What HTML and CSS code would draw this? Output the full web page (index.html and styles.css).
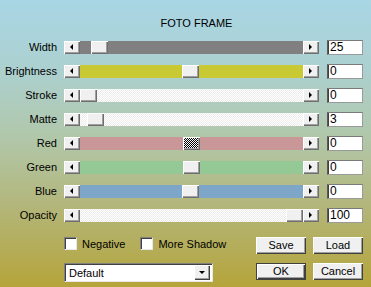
FILE: index.html
```html
<!DOCTYPE html>
<html>
<head>
<meta charset="utf-8">
<link rel="stylesheet" href="styles.css">
</head>
<body>
<div class="dialog">
  <div class="title">FOTO FRAME</div>
  <div class="rows">
    <div class="row">
      <span class="label">Width</span>
      <div class="slider">
        <span class="arrow left"></span>
        <div class="track t-gray"><span class="thumb" style="margin-left:11px"></span></div>
        <span class="arrow right"></span>
      </div>
      <div class="value">25</div>
    </div>
    <div class="row">
      <span class="label">Brightness</span>
      <div class="slider">
        <span class="arrow left"></span>
        <div class="track t-yellow"><span class="thumb" style="margin-left:102px"></span></div>
        <span class="arrow right"></span>
      </div>
      <div class="value">0</div>
    </div>
    <div class="row">
      <span class="label">Stroke</span>
      <div class="slider">
        <span class="arrow left"></span>
        <div class="track t-white"><span class="thumb" style="margin-left:0px"></span></div>
        <span class="arrow right"></span>
      </div>
      <div class="value">0</div>
    </div>
    <div class="row">
      <span class="label">Matte</span>
      <div class="slider">
        <span class="arrow left"></span>
        <div class="track t-white"><span class="thumb" style="margin-left:7px"></span></div>
        <span class="arrow right"></span>
      </div>
      <div class="value">3</div>
    </div>
    <div class="row">
      <span class="label">Red</span>
      <div class="slider">
        <span class="arrow left"></span>
        <div class="track t-red"><span class="thumb focus" style="margin-left:103px"></span></div>
        <span class="arrow right"></span>
      </div>
      <div class="value">0</div>
    </div>
    <div class="row">
      <span class="label">Green</span>
      <div class="slider">
        <span class="arrow left"></span>
        <div class="track t-green"><span class="thumb" style="margin-left:103px"></span></div>
        <span class="arrow right"></span>
      </div>
      <div class="value">0</div>
    </div>
    <div class="row">
      <span class="label">Blue</span>
      <div class="slider">
        <span class="arrow left"></span>
        <div class="track t-blue"><span class="thumb" style="margin-left:102px"></span></div>
        <span class="arrow right"></span>
      </div>
      <div class="value">0</div>
    </div>
    <div class="row">
      <span class="label">Opacity</span>
      <div class="slider">
        <span class="arrow left"></span>
        <div class="track t-white"><span class="thumb" style="margin-left:206px"></span></div>
        <span class="arrow right"></span>
      </div>
      <div class="value">100</div>
    </div>
  </div>
  <div class="bottom">
    <div class="left-col">
      <div class="checks">
        <label class="check"><span class="box"></span>Negative</label>
        <label class="check"><span class="box"></span>More Shadow</label>
      </div>
      <div class="select">
        <span class="select-text">Default</span>
        <span class="select-btn"></span>
      </div>
    </div>
    <div class="buttons">
      <div class="btn">Save</div>
      <div class="btn">Load</div>
      <div class="btn default">OK</div>
      <div class="btn">Cancel</div>
    </div>
  </div>
</div>
</body>
</html>
```
FILE: styles.css
```css
html, body {
  margin: 0;
  padding: 0;
}
body {
  width: 371px;
  height: 287px;
  overflow: hidden;
  font-family: "Liberation Sans", Arial, sans-serif;
  font-size: 11px;
  color: #000;
}
.dialog {
  width: 371px;
  height: 287px;
  box-sizing: border-box;
  background: linear-gradient(180deg, #a9d6e5 0%, #acd0cf 25%, #b1c6a6 50%, #b3b67a 72%, #b5a43a 100%);
  padding-top: 16px;
}
.title {
  padding-left: 22px;
  text-align: center;
  font-size: 11px;
  line-height: 14px;
  height: 14px;
}
.rows {
  margin-top: 5px;
  display: flex;
  flex-direction: column;
}
.row {
  height: 24px;
  display: flex;
  align-items: center;
}
.label {
  width: 57px;
  text-align: right;
  margin-right: 7px;
  line-height: 13px;
}
.slider {
  width: 255px;
  height: 13px;
  display: flex;
}
.arrow {
  width: 16px;
  height: 13px;
  box-sizing: border-box;
  background: #f0f0f0;
  box-shadow: inset 1px 1px #ffffff, inset -1px -1px #6e6e6e, inset -2px -2px #a0a0a0;
  display: flex;
  align-items: center;
  justify-content: center;
}
.arrow::before {
  content: "";
  width: 0;
  height: 0;
  border-top: 3px solid transparent;
  border-bottom: 3px solid transparent;
}
.arrow.left::before {
  border-right: 3px solid #000;
  margin-left: -1px;
}
.arrow.right::before {
  border-left: 3px solid #000;
  margin-left: -1px;
}
.track {
  flex: 1;
  height: 13px;
  display: flex;
}
.t-gray { background: #808080; }
.t-yellow { background: #c9c934; }
.t-red { background: #c99798; }
.t-green { background: #94c995; }
.t-blue { background: #7ea6c9; }
.t-white {
  background: repeating-conic-gradient(#ffffff 0 25%, #ececec 0 50%) 0 0 / 2px 2px;
}
.thumb {
  width: 17px;
  height: 13px;
  box-sizing: border-box;
  background: #f0f0f0;
  box-shadow: inset 1px 1px #ffffff, inset -1px -1px #6e6e6e, inset -2px -2px #a0a0a0;
}
.thumb.focus {
  background: repeating-conic-gradient(#000 0 25%, #fff 0 50%) 0 0 / 2px 2px;
}
.value {
  margin-left: 8px;
  width: 36px;
  height: 15px;
  box-sizing: border-box;
  background: #fff;
  border: 1px solid;
  border-color: #7a7a7a #9a9a9a #9a9a9a #5a5a5a;
  box-shadow: inset 1px 0 #404040;
  font-size: 12px;
  line-height: 13px;
  padding-left: 2px;
}
.bottom {
  margin-top: 10px;
  display: flex;
  padding-left: 64px;
}
.left-col {
  width: 192px;
  display: flex;
  flex-direction: column;
}
.checks {
  display: flex;
  height: 13px;
  align-items: center;
}
.check {
  display: flex;
  align-items: center;
  margin-right: 15px;
}
.box {
  width: 13px;
  height: 13px;
  box-sizing: border-box;
  background: #fff;
  border: 1px solid;
  border-color: #808080 #e8e8e8 #e8e8e8 #808080;
  box-shadow: inset 1px 1px #404040;
  margin-right: 5px;
}
.select {
  margin-top: 13px;
  width: 149px;
  height: 19px;
  box-sizing: border-box;
  background: #fff;
  border: 1px solid;
  border-color: #808080 #e8e8e8 #e8e8e8 #808080;
  box-shadow: inset 1px 1px #404040;
  display: flex;
  align-items: center;
  padding: 2px 2px 2px 4px;
}
.select-text {
  flex: 1;
  font-size: 11px;
}
.select-btn {
  width: 16px;
  height: 15px;
  box-sizing: border-box;
  background: #f0f0f0;
  box-shadow: inset 1px 1px #ffffff, inset -1px -1px #404040, inset -2px -2px #a0a0a0;
  display: flex;
  align-items: center;
  justify-content: center;
}
.select-btn::before {
  content: "";
  border-left: 3px solid transparent;
  border-right: 3px solid transparent;
  border-top: 3px solid #000;
  margin-top: -1px;
}
.buttons {
  display: grid;
  grid-template-columns: 50px 50px;
  column-gap: 7px;
  row-gap: 6px;
}
.btn {
  height: 17px;
  box-sizing: border-box;
  background: #f0f0f0;
  box-shadow: inset 1px 1px #ffffff, inset -1px -1px #404040, inset -2px -2px #a0a0a0;
  text-align: center;
  line-height: 16px;
  font-size: 11px;
}
.btn.default {
  border: 1px solid #404040;
  line-height: 15px;
}
```
